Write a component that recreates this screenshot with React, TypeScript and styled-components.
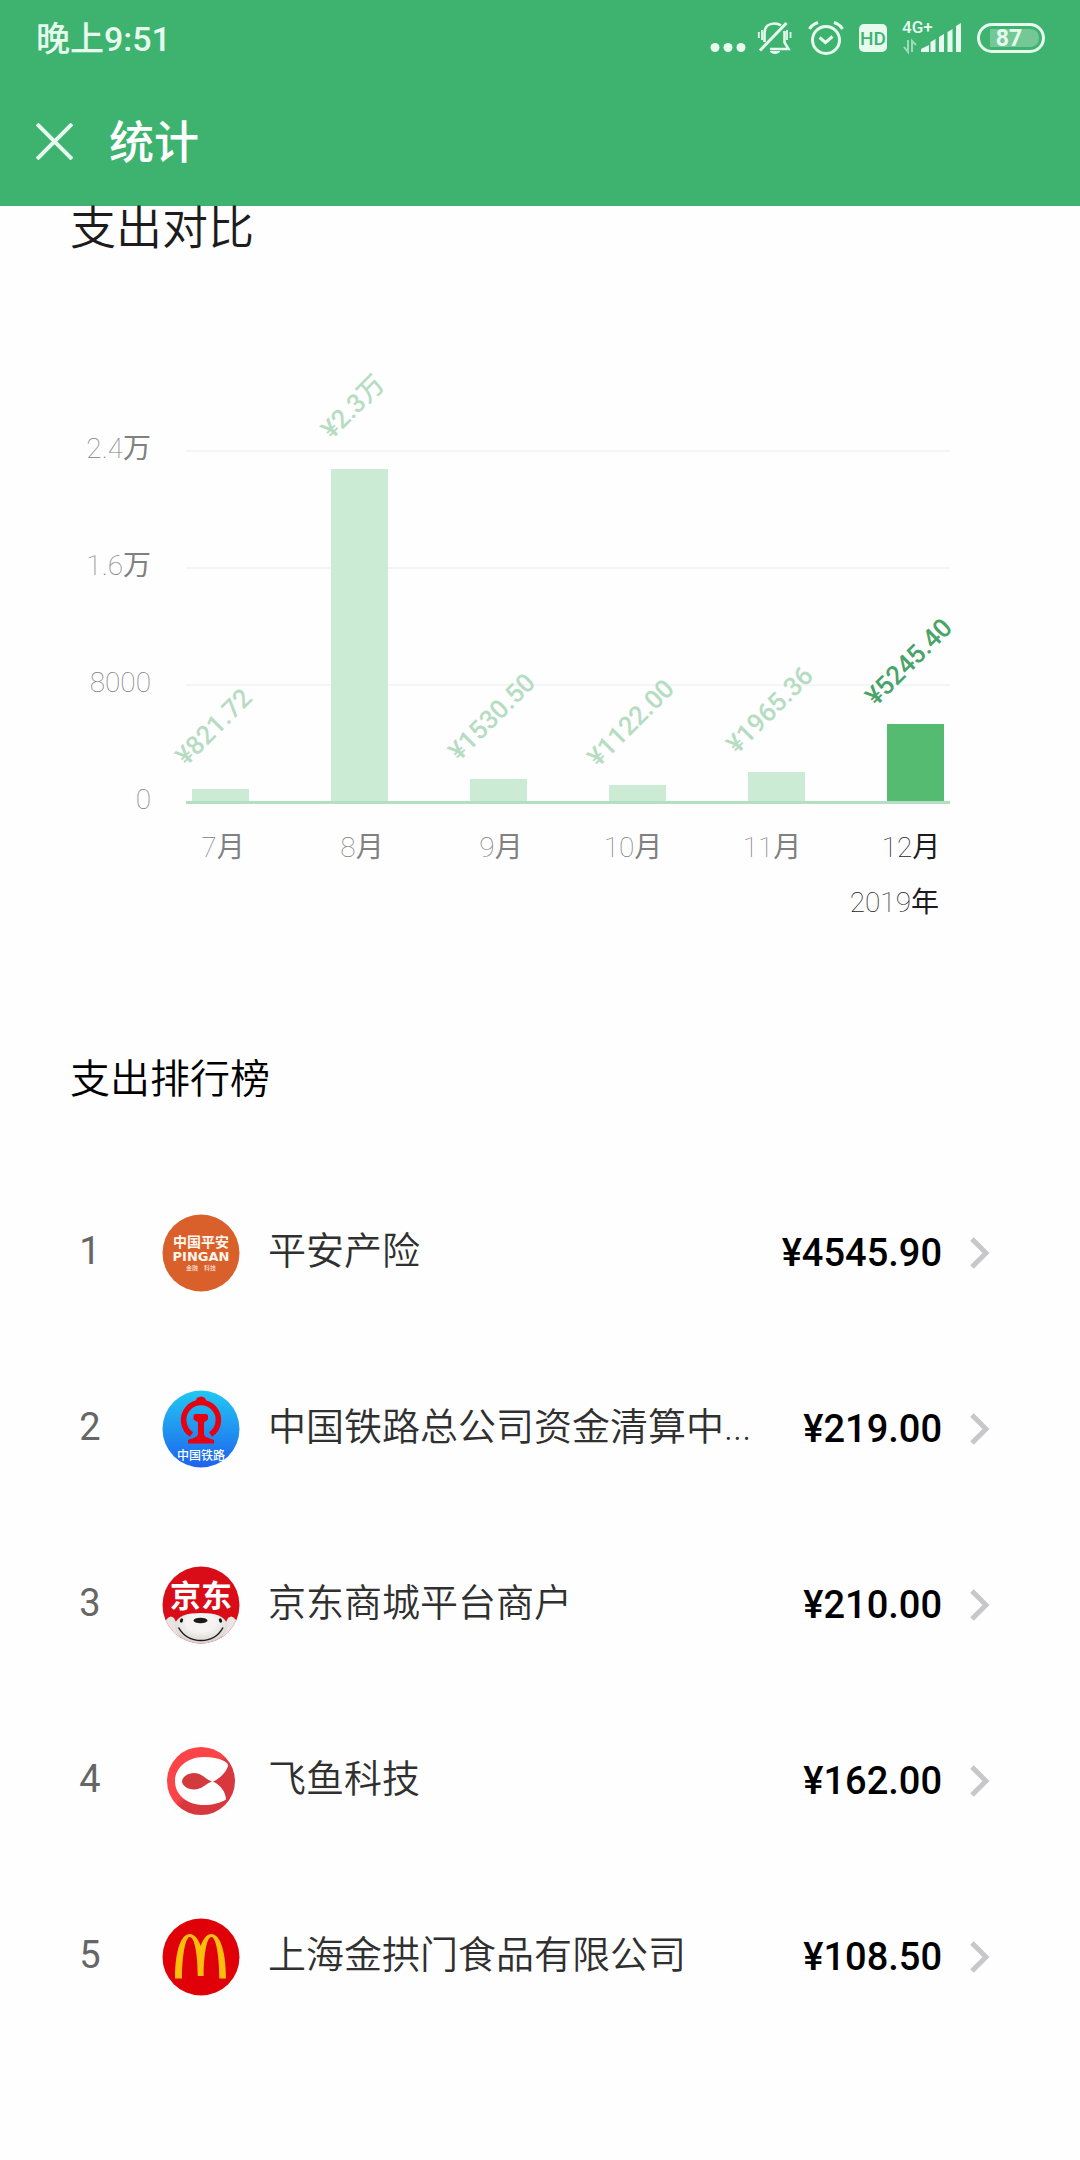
import React from 'react';
import styled, { createGlobalStyle } from 'styled-components';

const GlobalStyle = createGlobalStyle`
  * { box-sizing: border-box; }
  body {
    margin: 0;
    background: #fefefe;
    font-family: Roboto, "Noto Sans CJK SC", sans-serif;
  }
`;

const Page = styled.div`
  display: flex;
  flex-direction: column;
  min-height: 100vh;
`;

const Header = styled.header`
  background: #3eb370;
  color: #ffffff;
`;

const StatusBar = styled.div`
  display: flex;
  align-items: center;
  gap: 12px;
  height: 76px;
  padding: 0 34px 0 36px;
  color: #e6fbee;
`;

const Clock = styled.time`
  margin-right: auto;
  padding-top: 2px;
  font-size: 34px;
  font-weight: 500;
  line-height: 40px;
`;

const StatusIcon = styled.svg`
  display: block;
  flex: none;
  overflow: visible;
`;

const NavBar = styled.div`
  display: flex;
  align-items: center;
  gap: 36px;
  height: 130px;
  padding: 0 36px;
`;

const CloseButton = styled.button`
  display: block;
  width: 37px;
  height: 37px;
  padding: 0;
  border: 0;
  background: none;
  color: #e6fbee;
`;

const Title = styled.h1`
  margin: 0;
  padding-top: 6px;
  font-size: 45px;
  font-weight: 500;
  line-height: 48px;
`;

const Content = styled.main`
  display: flex;
  flex: 1;
  flex-direction: column;
`;

const ChartTitle = styled.h2`
  margin: 0 70px;
  font-size: 46px;
  font-weight: 350;
  line-height: 44px;
  color: #1c1c1c;
`;

const Chart = styled.svg`
  display: block;
  width: 100%;
  height: auto;
  margin-top: 90px;
`;

const AxisText = styled.text<{ $current?: boolean }>`
  font-size: 28px;
  font-weight: 100;
  fill: ${(p) => (p.$current ? '#1c1c1c' : '#808080')};
`;

const Unit = styled.tspan`
  font-weight: 400;
`;

const ValueText = styled.text<{ $current?: boolean }>`
  font-size: 26px;
  font-weight: 500;
  fill: ${(p) => (p.$current ? '#48a468' : '#b6dcc2')};
`;

const ListTitle = styled.h2`
  margin: 128px 70px 63px;
  font-size: 40px;
  font-weight: 350;
  line-height: 44px;
  color: #000000;
`;

const List = styled.ol`
  margin: 0;
  padding: 0;
  list-style: none;
`;

const RowLink = styled.a`
  display: flex;
  align-items: center;
  height: 176px;
  padding: 0 91px 0 70px;
  font-size: 38px;
  line-height: 44px;
  text-decoration: none;
`;

const Rank = styled.span`
  width: 40px;
  margin-right: 52px;
  padding-bottom: 4px;
  text-align: center;
  color: #666666;
`;

const Logo = styled.svg`
  flex: none;
  width: 78px;
  height: 78px;
  margin-right: 28px;
`;

const Name = styled.span`
  flex: 1;
  min-width: 0;
  padding-bottom: 4px;
  font-weight: 350;
  white-space: nowrap;
  color: #303030;
`;

const Amount = styled.span`
  margin-right: 28px;
  font-weight: 500;
  color: #000000;
`;

const Chevron = styled.svg`
  flex: none;
  width: 19px;
  height: 32px;
`;

const BASELINE = 462;
const months = [
  { month: 7, value: '¥821.72', height: 13 },
  { month: 8, value: '¥2.3万', height: 333 },
  { month: 9, value: '¥1530.50', height: 23 },
  { month: 10, value: '¥1122.00', height: 17 },
  { month: 11, value: '¥1965.36', height: 30 },
  { month: 12, value: '¥5245.40', height: 78 },
];
const ticks = [
  { label: '2.4', unit: '万', y: 111 },
  { label: '1.6', unit: '万', y: 228 },
  { label: '8000', unit: '', y: 345 },
  { label: '0', unit: '', y: BASELINE },
];

function SpendingChart() {
  return (
    <Chart viewBox="0 0 1080 590" role="img" aria-label="支出对比">
      {ticks.map((t) => (
        <g key={t.label}>
          <AxisText x={151} y={t.y + 7} textAnchor="end">
            {t.label}
            {t.unit && <Unit>{t.unit}</Unit>}
          </AxisText>
          {t.y !== BASELINE && <rect x={186} y={t.y - 1} width={764} height={2} fill="#f5f5f5" />}
        </g>
      ))}
      {months.map((m, i) => {
        const x = 192 + i * 139;
        const current = i === months.length - 1;
        return (
          <g key={m.month}>
            <rect
              x={x}
              y={BASELINE - m.height}
              width={57}
              height={m.height}
              fill={current ? '#55bb70' : '#cbebd5'}
            />
            <ValueText
              $current={current}
              textAnchor="middle"
              transform={`translate(${x + 28} ${BASELINE - m.height - 56}) rotate(-45)`}
            >
              {m.value}
            </ValueText>
            <AxisText
              $current={current}
              x={x + (m.month > 9 ? 24 : 31)}
              y={BASELINE + 55}
              textAnchor="middle"
            >
              {m.month}
              <Unit>月</Unit>
            </AxisText>
          </g>
        );
      })}
      <rect x={186} y={BASELINE - 1} width={764} height={3} fill="#b5dfc3" />
      <AxisText $current x={939} y={BASELINE + 110} textAnchor="end">
        2019<Unit>年</Unit>
      </AxisText>
    </Chart>
  );
}

const PingAnLogo = () => (
  <Logo viewBox="0 0 78 78" aria-hidden="true">
    <circle cx="39" cy="39" r="38.5" fill="#d95f2b" />
    <g fill="#fff6ee" textAnchor="middle">
      <text x="39" y="33" fontSize="14" fontWeight="700">中国平安</text>
      <text x="39" y="47" fontSize="13" fontWeight="700" fontFamily="DejaVu Sans">PINGAN</text>
      <text x="39" y="56" fontSize="6">金融　科技</text>
    </g>
  </Logo>
);

const RailwayLogo = () => (
  <Logo viewBox="0 0 78 78" aria-hidden="true">
    <defs>
      <linearGradient id="rail" x1="0" y1="0" x2="0" y2="1">
        <stop offset="0" stopColor="#22c8f2" />
        <stop offset="1" stopColor="#1e62ee" />
      </linearGradient>
    </defs>
    <circle cx="39" cy="39" r="38.5" fill="url(#rail)" />
    <path d="M29.5 44.5A17.4 17.4 0 1 1 48.5 44.5" fill="none" stroke="#e60012" strokeWidth="5.6" />
    <path d="M33 12L35 8Q39 4.800 43 8L45 12Z" fill="#e60012" />
    <path
      d="M33.500 24H44Q46 24 46 26V29.500L42 32.500V43Q42 46.500 45 47.500L52 50V53.500H26V50L33 47.500Q36 46.500 36 43V32.500L31.500 29.500V26Q31.500 24 33.500 24Z"
      fill="#e60012"
    />
    <text x="39" y="70" fontSize="12" fontWeight="500" fill="#ffffff" textAnchor="middle">中国铁路</text>
  </Logo>
);

const JdLogo = () => (
  <Logo viewBox="0 0 78 78" aria-hidden="true">
    <defs>
      <clipPath id="jdClip"><circle cx="39" cy="39" r="38.500" /></clipPath>
      <radialGradient id="dog" cx="0.5" cy="0.3" r="0.7">
        <stop offset="0.4" stopColor="#f6f4f2" />
        <stop offset="1" stopColor="#cfcac7" />
      </radialGradient>
    </defs>
    <g clipPath="url(#jdClip)">
      <rect width="78" height="78" fill="#d90d18" />
      <text x="39" y="41" fontSize="31" fontWeight="700" fill="#ffffff" textAnchor="middle">京东</text>
      <path d="M4 54Q8 48 12 52L17 62L18 74H0Z" fill="#e9e5e3" />
      <path d="M74 54Q70 48 66 52L61 62L60 74H78Z" fill="#e9e5e3" />
      <path d="M13 58C15 50 25 47 39 47S63 50 65 58C66 69 54 79 39 79S12 69 13 58Z" fill="url(#dog)" />
      <ellipse cx="38.500" cy="54.500" rx="7" ry="2.800" fill="#1a1a1a" />
      <ellipse cx="19.500" cy="54.500" rx="1.500" ry="2.200" fill="#1a1a1a" transform="rotate(25 19.5 54.5)" />
      <ellipse cx="58.500" cy="54.500" rx="1.500" ry="2.200" fill="#1a1a1a" transform="rotate(-25 58.5 54.5)" />
      <path d="M16.500 61.500Q24 74.500 39 74.500T61 61.500" fill="none" stroke="#1a1a1a" strokeWidth="1.500" />
    </g>
  </Logo>
);

const FeiyuLogo = () => (
  <Logo viewBox="0 0 78 78" aria-hidden="true">
    <defs>
      <linearGradient id="fish" x1="0.2" y1="0.2" x2="0.8" y2="0.8">
        <stop offset="0.45" stopColor="#fb4448" />
        <stop offset="0.55" stopColor="#d8383d" />
      </linearGradient>
    </defs>
    <circle cx="39" cy="39" r="38" fill="#ffffff" stroke="#f7f9fa" />
    <circle cx="39" cy="39" r="34" fill="url(#fish)" />
    <path
      d="M66 24C66 22 65 20.500 62 19C56 16 50 15 42 15C24 15 13 27 13 39C13 53 25 63 42 63C50 63 59 61 64 57.500C64 51 59 43 51 39.500C59 36 64 30 66 24Z"
      fill="#ffffff"
    />
    <path d="M50 39.500C43 37 40 31 32 31C25 31 20 36 20 39.500C20 43 25 47.500 32 47.500C40 47.500 43 42 50 39.500Z" fill="#d23a3e" />
  </Logo>
);

const ArchesLogo = () => (
  <Logo viewBox="0 0 78 78" aria-hidden="true">
    <circle cx="39" cy="39" r="38.500" fill="#e00008" />
    <path
      d="M13 60.500C13 36 18 16 27.700 16C32.500 16 36.500 21 38.700 28C41 21 44.500 16 49.300 16C59 16 64 36 64 60.500H57.300C57.300 38 54 19 49.300 19C45 19 41.700 36 41.700 58H35.700C35.700 36 32.500 19 27.700 19C23.500 19 20 38 20 60.500Z"
      fill="#ffbe0b"
    />
  </Logo>
);

const merchants = [
  { name: '平安产险', amount: '¥4545.90', Icon: PingAnLogo },
  { name: '中国铁路总公司资金清算中...', amount: '¥219.00', Icon: RailwayLogo },
  { name: '京东商城平台商户', amount: '¥210.00', Icon: JdLogo },
  { name: '飞鱼科技', amount: '¥162.00', Icon: FeiyuLogo },
  { name: '上海金拱门食品有限公司', amount: '¥108.50', Icon: ArchesLogo },
];

function StatusIcons() {
  return (
    <>
      <StatusIcon width="36" height="36" fill="currentColor">
        <circle cx="5" cy="27.500" r="4.500" />
        <circle cx="18" cy="27.500" r="4.500" />
        <circle cx="31" cy="27.500" r="4.500" />
      </StatusIcon>
      <StatusIcon width="37" height="36" fill="none" stroke="currentColor" strokeWidth="2.600">
        <path d="M6.500 22V13C6.500 6.500 11 3.500 16.500 3.500C19 3.500 21.500 4.300 23 5.500M26.500 11V22.500L30.500 29H12" />
        <path d="M2 30.500L28.500 3" strokeWidth="3" />
        <path d="M0.800 12V18M4 10V20M29 10V20M32.500 12V18" strokeWidth="1.800" />
        <path d="M12 31.500H22Q17 35.500 12 31.500Z" fill="currentColor" strokeWidth="1" />
      </StatusIcon>
      <StatusIcon width="39" height="36" fill="none" stroke="currentColor" strokeWidth="3">
        <circle cx="19" cy="20" r="13.500" />
        <path d="M12.500 17.500L18.500 22.500L25.500 16.500" />
        <path d="M2.500 9Q5 4.500 11 2.500M35.500 9Q33 4.500 27 2.500" />
      </StatusIcon>
      <StatusIcon width="31" height="36">
        <rect x="1" y="4" width="28" height="28" rx="5" fill="currentColor" />
        <text x="15" y="25" fontSize="19" fontWeight="500" fill="#3eb370" textAnchor="middle">HD</text>
      </StatusIcon>
      <StatusIcon width="63" height="36" fill="currentColor">
        <text x="1" y="13" fontSize="17" fontWeight="500">4G+</text>
        <path d="M20 32V29L28 25V32ZM29.500 32V22L34.500 19V32ZM38 32V17L43 14V32ZM46.500 32V12L51.500 9V32ZM55 32V6L60 3V32Z" />
        <path d="M7 20V32L3 27M11 32V21L15 25" fill="none" stroke="#9ddcb6" strokeWidth="2" />
      </StatusIcon>
      <StatusIcon width="70" height="36">
        <rect x="2.500" y="4.500" width="65" height="27" rx="13.500" fill="none" stroke="currentColor" strokeWidth="3" />
        <path d="M14 9H55Q63 10 63 18T55 27H14Z" fill="#74c896" />
        <text x="33" y="26" fontSize="23" fontWeight="700" fill="currentColor" textAnchor="middle">87</text>
      </StatusIcon>
    </>
  );
}

export default function App() {
  return (
    <Page>
      <GlobalStyle />
      <Header>
        <StatusBar>
          <Clock>晚上9:51</Clock>
          <StatusIcons />
        </StatusBar>
        <NavBar>
          <CloseButton type="button" aria-label="关闭">
            <svg width="37" height="37" viewBox="0 0 37 37" fill="none" stroke="currentColor" strokeWidth="4">
              <path d="M1 1L36 36M36 1L1 36" />
            </svg>
          </CloseButton>
          <Title>统计</Title>
        </NavBar>
      </Header>
      <Content>
        <ChartTitle>支出对比</ChartTitle>
        <SpendingChart />
        <ListTitle>支出排行榜</ListTitle>
        <List>
          {merchants.map(({ name, amount, Icon }, i) => (
            <li key={name}>
              <RowLink href="#">
                <Rank>{i + 1}</Rank>
                <Icon />
                <Name>{name}</Name>
                <Amount>{amount}</Amount>
                <Chevron viewBox="0 0 19 32" aria-hidden="true">
                  <path d="M2 2L16 16L2 30" fill="none" stroke="#c7c7cb" strokeWidth="5" />
                </Chevron>
              </RowLink>
            </li>
          ))}
        </List>
      </Content>
    </Page>
  );
}
